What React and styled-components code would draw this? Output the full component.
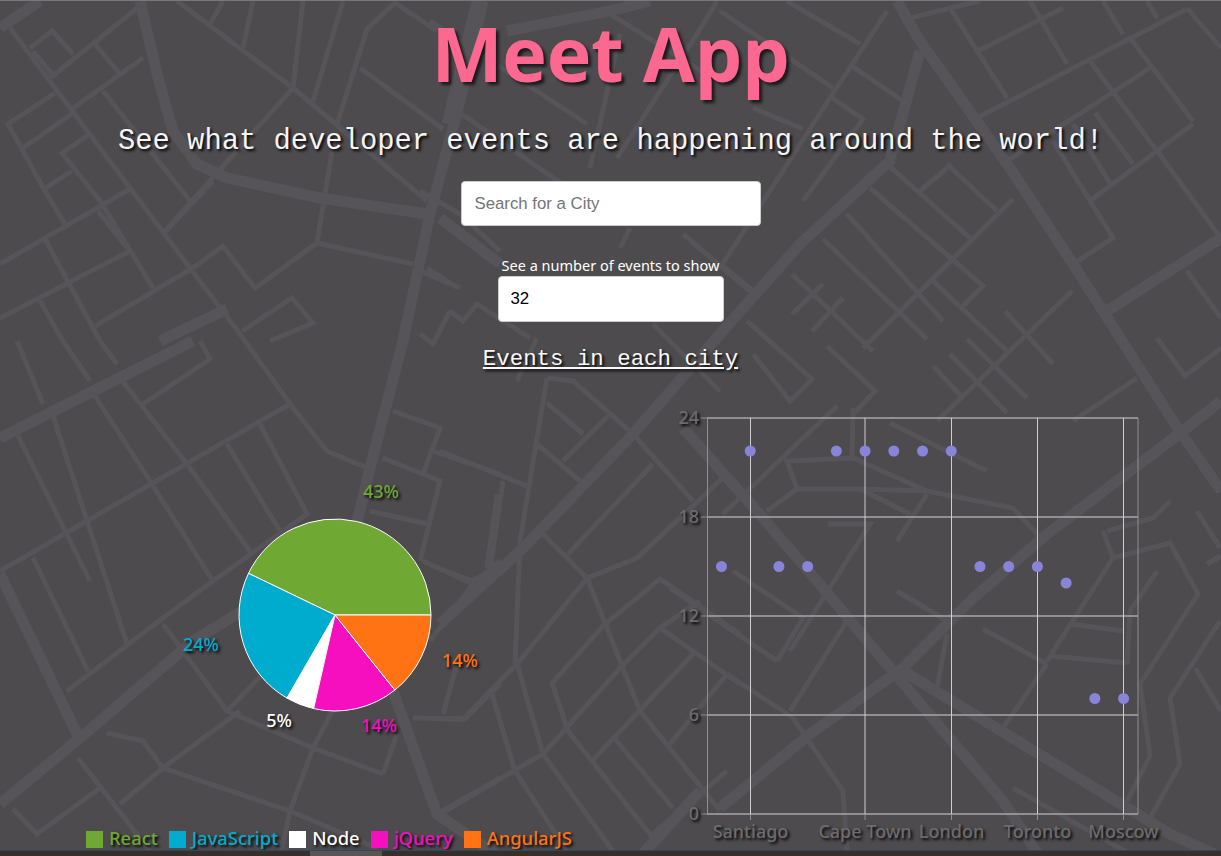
import React from "react";
import styled, { createGlobalStyle } from "styled-components";

const GlobalStyle = createGlobalStyle`
  html, body { margin: 0; padding: 0; background: #4d4b4e; }
  body { font-family: "Noto Sans", "Open Sans", sans-serif; overflow: hidden; }
  * { box-sizing: border-box; }
`;

const Page = styled.div`
  position: relative;
  height: 856px;
  border-top: 1px solid #79777a;
  background: #4d4b4e;
  display: flex;
  flex-direction: column;
  align-items: center;
  overflow: hidden;
  text-shadow: 2px 2px 3px #000;
`;

const MapLayer = styled.svg`
  position: absolute;
  inset: 0;
  width: 1221px;
  height: 856px;
  z-index: 0;
`;

const Content = styled.div`
  position: relative;
  z-index: 1;
  flex: 1;
  width: 100%;
  display: flex;
  flex-direction: column;
  align-items: center;
`;

const Title = styled.h1`
  margin: 0;
  height: 124px;
  font-family: "Open Sans", sans-serif;
  font-weight: 700;
  font-size: 75.5px;
  line-height: 104px;
  letter-spacing: -0.3px;
  color: #fc6890;
  text-shadow: 3px 3px 3px #1c1c1c;
`;

const Subtitle = styled.h2`
  margin: 0;
  font-family: "Liberation Mono", monospace;
  font-weight: 400;
  font-size: 28.8px;
  line-height: 34px;
  color: #f4f4f4;
`;

const SearchInput = styled.input`
  margin-top: 22px;
  width: 300px;
  height: 45px;
  padding: 0 13px;
  border: 1px solid #ccc;
  border-radius: 4px;
  background: #fff;
  font-family: "Liberation Sans", sans-serif;
  font-size: 16.8px;
  color: #000;
  &::placeholder { color: #757575; opacity: 1; }
`;

const NumberLabel = styled.label`
  margin-top: 30px;
  height: 20px;
  font-size: 14.5px;
  line-height: 19px;
  color: #fff;
  text-shadow: none;
`;

const NumberInput = styled.input`
  width: 226px;
  height: 46px;
  padding: 0 12px 0 12px;
  border: 1px solid #ccc;
  border-radius: 4px;
  background: #fff;
  font-family: "Liberation Sans", sans-serif;
  font-size: 16.8px;
  color: #000;
`;

const ChartHeading = styled.h4`
  margin: 24px 0 0;
  font-family: "Liberation Mono", monospace;
  font-weight: 400;
  font-size: 22.4px;
  line-height: 26px;
  color: #f8f8f8;
  text-decoration: underline;
`;

const Charts = styled.div`
  flex: 1;
  width: 100%;
  margin-top: 28px;
  display: grid;
  grid-template-columns: 610px 611px;
`;

const PieColumn = styled.div`
  display: flex;
  flex-direction: column;
`;

const PieSvg = styled.svg`
  display: block;
  width: 610px;
  height: 426px;
  font-size: 18px;
  font-weight: 500;
`;

const Legend = styled.ul`
  list-style: none;
  margin: 0;
  padding: 0 0 0 86px;
  display: flex;
  gap: 11px;
  height: 24px;
  align-items: center;
`;

const LegendItem = styled.li`
  display: flex;
  align-items: center;
  gap: 6px;
  font-size: 18.4px;
  font-weight: 500;
  line-height: 24px;
  color: ${(p) => p.$color};
`;

const Swatch = styled.span`
  width: 17px;
  height: 17px;
  margin-top: 3px;
  background: ${(p) => p.$color};
`;

const ScatterSvg = styled.svg`
  display: block;
  width: 611px;
  height: 450px;
  font-size: 18px;
  font-weight: 500;
`;

const AxisText = styled.text`
  fill: #6d6b6d;
`;

const BottomStrip = styled.div`
  position: relative;
  z-index: 1;
  width: 100%;
  height: 6px;
  flex: none;
  border-top: 1px solid #1f4d6b;
  background: #3a2e29;
  padding-left: 310px;
`;

const StripThumb = styled.div`
  width: 72px;
  height: 100%;
  background: #5d5450;
`;

const thick = [
  "140,0 157,73 173,130 197,163 227,177 320,197 427,213",
  "483,0 460,100 430,213 403,340 370,467 355,530",
  "0,27 40,0",
  "507,30 610,10 650,0",
  "0,437 193,340",
  "0,573 77,733",
  "0,803 80,737 193,640 263,597",
  "893,157 800,243 720,333 633,433 520,550 440,623",
  "897,0 920,40 1010,167 1073,263 1173,420 1221,490",
  "920,50 900,123 890,157",
  "683,427 763,517 823,587 890,667 1003,800 1040,856",
  "720,807 810,733 903,667 970,600 1047,533 1170,440 1221,400",
  "903,670 1170,833 1221,856",
  "1107,310 1221,237",
  "393,690 437,813 500,856",
  "160,340 227,308",
  "440,217 500,263",
  "477,0 447,123",
  "700,790 640,856",
];

const thin = [
  "10,27 190,267 240,333 293,407 327,450 367,467",
  "177,0 293,87 427,200",
  "293,87 165,230",
  "30,47 52,30 73,53",
  "33,50 52,73",
  "50,77 140,5",
  "73,107 143,57",
  "95,43 120,73",
  "103,90 190,200",
  "55,92 8,123 45,190 65,223",
  "23,147 73,112",
  "90,133 62,152 100,200 153,287",
  "45,187 72,170",
  "0,263 130,188",
  "45,238 100,340",
  "98,210 132,253",
  "0,317 130,250",
  "40,300 63,340",
  "95,325 193,267 223,245 255,287 317,242 335,133",
  "317,242 413,263",
  "293,87 303,0",
  "313,100 343,0",
  "337,123 367,28 395,2 437,30",
  "360,67 443,128",
  "210,23 223,0",
  "243,47 253,0",
  "462,113 500,140 587,200",
  "427,267 458,287",
  "213,180 163,233",
  "242,330 292,297 313,322 270,340",
  "200,340 210,358 143,403",
  "17,340 43,403",
  "63,340 90,380",
  "100,340 117,363",
  "120,377 187,463 250,550",
  "0,570 290,403",
  "53,415 127,643",
  "33,557 88,670",
  "17,433 90,580",
  "93,392 150,480 213,580",
  "227,443 280,530",
  "260,423 307,513 213,580 163,617 67,690",
  "163,623 227,710 313,747 383,773",
  "227,710 263,673",
  "107,732 143,740 163,767 240,710",
  "163,767 290,810 377,847",
  "78,757 150,850",
  "13,808 37,833 100,787",
  "120,803 163,767",
  "290,810 313,747 335,705",
  "280,856 290,810",
  "383,773 397,733",
  "437,813 500,777",
  "413,717 465,718 500,683",
  "443,713 457,663",
  "423,560 473,583 500,560",
  "473,583 430,640",
  "393,410 440,427 423,473",
  "433,450 500,473",
  "383,457 440,480 420,560",
  "370,510 427,523",
  "487,567 497,493",
  "547,377 573,380 633,433 693,500",
  "547,377 520,540 515,663",
  "547,402 583,433",
  "608,415 563,460",
  "537,443 580,480",
  "440,450 527,485",
  "503,480 490,570 473,580 440,568",
  "540,530 587,577 637,557 727,473",
  "653,463 568,553",
  "587,577 517,663 463,718 440,718",
  "587,577 640,710 720,810",
  "517,663 543,753 613,850",
  "492,693 515,770 567,850",
  "440,813 543,753 620,667 660,627 700,600",
  "605,623 660,578 740,633",
  "605,623 552,682 568,730 653,837",
  "660,627 740,683",
  "592,760 693,653",
  "615,738 673,807",
  "653,833 727,770",
  "670,743 727,673",
  "837,405 723,513",
  "853,407 852,457 787,460 797,488 857,488 927,490 1013,507 1037,533",
  "853,457 927,490",
  "797,488 767,510",
  "860,488 910,513",
  "927,493 897,540",
  "890,422 987,470",
  "897,590 947,620",
  "828,523 870,523 790,650",
  "983,628 1047,663",
  "1047,663 1003,727",
  "1070,623 1123,630",
  "1050,655 1127,662",
  "847,620 790,710",
  "733,570 803,617 777,660",
  "670,587 777,660",
  "727,673 793,717 843,790 847,850",
  "947,633 937,687",
  "1013,787 1137,857",
  "1103,530 1113,557 1170,542 1198,593 1140,683 1150,755 1127,800",
  "1107,530 1153,517 1170,500",
  "1113,557 1047,660",
  "1157,570 1130,610 1127,663",
  "1220,620 1170,697 1180,763 1150,817",
  "1195,667 1221,710",
  "1197,510 1220,547",
  "1207,563 1221,555",
  "787,0 860,43",
  "887,10 830,97 720,267",
  "720,10 833,87",
  "852,65 903,100",
  "832,97 863,118 803,200",
  "753,107 803,128",
  "907,18 950,7 1007,97",
  "950,7 980,0",
  "978,50 1063,7",
  "1030,0 1067,63",
  "977,117 1187,8",
  "1103,0 1123,33",
  "1147,0 1157,17",
  "1130,37 1193,120",
  "1187,7 1221,47",
  "1090,60 1157,150 1221,237",
  "1007,160 1150,67",
  "1193,123 1090,200",
  "1053,140 1113,237 1073,263",
  "1095,112 1133,163",
  "1073,123 1110,182",
  "1187,270 1221,317",
  "1157,337 1185,375 1221,347",
  "1137,377 1073,420",
  "887,163 970,237",
  "947,163 997,210",
  "920,190 947,167",
  "870,187 983,285 963,305",
  "847,213 943,320",
  "823,238 927,338",
  "1013,198 863,347",
  "792,273 873,350",
  "933,280 1007,350",
  "1072,290 937,420",
  "1005,310 1053,363",
  "967,338 1027,397",
  "950,353 1007,412",
  "933,365 963,397",
  "827,345 875,390 853,413",
  "747,320 812,378 790,400 753,353",
  "720,263 757,293",
  "792,313 823,283",
  "812,330 843,297",
  "610,13 717,80",
  "620,33 590,167",
  "717,0 697,33 617,157",
  "430,20 587,123",
  "420,190 460,213 500,250",
  "420,270 460,287",
  "450,310 433,343 420,333",
  "450,310 463,320 477,303 530,337",
  "683,233 753,293 687,370",
  "753,293 780,270",
  "537,337 517,380",
  "630,227 620,247",
  "653,323 720,390",
];

const slices = [
  { name: "React", value: 9, color: "#6fa833", label: "43%", lx: 381, ly: 498 },
  { name: "JavaScript", value: 5, color: "#00accd", label: "24%", lx: 201, ly: 651 },
  { name: "Node", value: 1, color: "#ffffff", label: "5%", lx: 279, ly: 727 },
  { name: "jQuery", value: 3, color: "#f50fbf", label: "14%", lx: 379, ly: 732 },
  { name: "AngularJS", value: 3, color: "#ff7314", label: "14%", lx: 460, ly: 667 },
];

function piePaths(cx, cy, r) {
  const total = slices.reduce((s, d) => s + d.value, 0);
  let acc = 0;
  return slices.map((d) => {
    const a0 = (acc / total) * 2 * Math.PI;
    acc += d.value;
    const a1 = (acc / total) * 2 * Math.PI;
    const x0 = cx + r * Math.cos(a0);
    const y0 = cy - r * Math.sin(a0);
    const x1 = cx + r * Math.cos(a1);
    const y1 = cy - r * Math.sin(a1);
    return {
      ...d,
      d: `M${cx},${cy} L${x0},${y0} A${r},${r} 0 ${a1 - a0 > Math.PI ? 1 : 0} 0 ${x1},${y1} Z`,
    };
  });
}

const points = [15, 22, 15, 15, 22, 22, 22, 22, 22, 15, 15, 15, 14, 7, 7];
const xTicks = [
  [750.5, "Santiago"],
  [865, "Cape Town"],
  [951.5, "London"],
  [1037.5, "Toronto"],
  [1123.5, "Moscow"],
];
const yTicks = [
  [418, "24"],
  [517, "18"],
  [616, "12"],
  [715, "6"],
  [814, "0"],
];

export default function App() {
  return (
    <Page>
      <GlobalStyle />
      <MapLayer viewBox="0 0 1221 856" fill="none" stroke="#565458" strokeLinejoin="miter">
        {thin.map((p, i) => (
          <polyline key={i} points={p} strokeWidth="5" />
        ))}
        {thick.map((p, i) => (
          <polyline key={i} points={p} strokeWidth="11" />
        ))}
      </MapLayer>
      <Content>
        <Title>Meet App</Title>
        <Subtitle>See what developer events are happening around the world!</Subtitle>
        <SearchInput placeholder="Search for a City" />
        <NumberLabel>See a number of events to show</NumberLabel>
        <NumberInput type="number" defaultValue={32} />
        <ChartHeading>Events in each city</ChartHeading>
        <Charts>
          <PieColumn>
            <PieSvg viewBox="0 400 610 426">
              {piePaths(335, 615, 96).map((s) => (
                <path key={s.name} d={s.d} fill={s.color} stroke="#fff" strokeWidth="1" />
              ))}
              {slices.map((s) => (
                <text key={s.name} x={s.lx} y={s.ly} textAnchor="middle" fill={s.color}>
                  {s.label}
                </text>
              ))}
            </PieSvg>
            <Legend>
              {slices.map((s) => (
                <LegendItem key={s.name} $color={s.color}>
                  <Swatch $color={s.color} />
                  {s.name}
                </LegendItem>
              ))}
            </Legend>
          </PieColumn>
          <ScatterSvg viewBox="610 400 611 450">
            <g stroke="#a8a6a8" strokeWidth="1.5">
              {yTicks.map(([y]) => (
                <line key={y} x1="707" x2="1138" y1={y} y2={y} />
              ))}
            </g>
            <g stroke="#cfcdcf" strokeWidth="1">
              {xTicks.map(([x]) => (
                <line key={x} x1={x} x2={x} y1="418" y2="814" />
              ))}
            </g>
            <g stroke="#918f91" strokeWidth="1">
              <line x1="707.5" x2="707.5" y1="418" y2="814" />
              <line x1="1138" x2="1138" y1="418" y2="814" />
              {yTicks.map(([y]) => (
                <line key={y} x1="701" x2="707" y1={y} y2={y} />
              ))}
              {xTicks.map(([x]) => (
                <line key={x} x1={x} x2={x} y1="814" y2="820" />
              ))}
            </g>
            {points.map((v, i) => (
              <circle key={i} cx={721.5 + i * 28.72} cy={814 - v * 16.5} r="5.5" fill="#8884d8" />
            ))}
            {yTicks.map(([y, t]) => (
              <AxisText key={y} x="699" y={y + 6} textAnchor="end">
                {t}
              </AxisText>
            ))}
            {xTicks.map(([x, t]) => (
              <AxisText key={x} x={x} y="838" textAnchor="middle">
                {t}
              </AxisText>
            ))}
          </ScatterSvg>
        </Charts>
      </Content>
      <BottomStrip>
        <StripThumb />
      </BottomStrip>
    </Page>
  );
}
